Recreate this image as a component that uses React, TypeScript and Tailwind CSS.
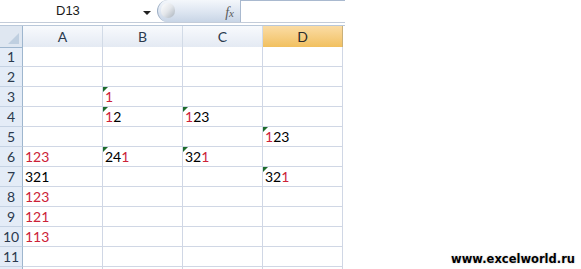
import React from "react";

type Seg = { t: string; r?: boolean };
type Cell = { segs: Seg[]; tri?: boolean } | null;

const R = (t: string): Seg => ({ t, r: true });
const K = (t: string): Seg => ({ t });

const rows: Cell[][] = [
  [null, null, null, null],
  [null, null, null, null],
  [null, { segs: [R("1")], tri: true }, null, null],
  [null, { segs: [R("1"), K("2")], tri: true }, { segs: [R("1"), K("23")], tri: true }, null],
  [null, null, null, { segs: [R("1"), K("23")], tri: true }],
  [{ segs: [R("123")] }, { segs: [K("24"), R("1")], tri: true }, { segs: [K("32"), R("1")], tri: true }, null],
  [{ segs: [K("321")] }, null, null, { segs: [K("32"), R("1")], tri: true }],
  [{ segs: [R("123")] }, null, null, null],
  [{ segs: [R("121")] }, null, null, null],
  [{ segs: [R("113")] }, null, null, null],
  [null, null, null, null],
  [null, null, null, null],
];

const cellFont = { fontFamily: "Lato, 'Noto Sans', sans-serif" };

export default function App() {
  return (
    <div className="relative w-[581px] h-[269px] bg-white overflow-hidden">
      <div className="w-[345px]">
        {/* formula bar */}
        <div className="flex h-[23px] border-b border-[#c3ccd9]">
          <div className="relative w-[157px] h-full bg-white">
            <span
              className="absolute left-[56px] top-[3px] text-[13px] leading-[16px] text-[#1a1a1a]"
              style={{ fontFamily: "'Liberation Sans', Arial, sans-serif" }}
            >
              D13
            </span>
            <span className="absolute left-[143px] top-[11px] w-0 h-0 border-l-[4px] border-r-[4px] border-t-[4px] border-l-transparent border-r-transparent border-t-[#222]" />
          </div>
          <div className="relative w-[83px] h-full rounded-l-[11px] bg-gradient-to-b from-[#f4f7fb] via-[#dfe7f2] to-[#c8d5e6] border-l border-[#9fb0c6]">
            <span className="absolute left-[3px] top-[3px] w-[14px] h-[15px] rounded-full bg-gradient-to-br from-[#ffffff] via-[#e3e6ea] to-[#a9b2bc]" />
            <span
              className="absolute right-[6px] top-[2px] text-[14px] italic text-[#5a5a5a]"
              style={{ fontFamily: "'Liberation Serif', 'Times New Roman', serif" }}
            >
              f<span className="text-[11px]">x</span>
            </span>
          </div>
          <div className="flex-1 h-full bg-white border-t border-l border-[#a9b9cf]" />
        </div>
        <div className="h-[2px] bg-white" />
        {/* column headers */}
        <div
          className="grid grid-cols-[23px_80px_80px_80px_80px] h-[22px] border-t border-[#b9c8da]"
          style={{ fontFamily: "Lato, 'Noto Sans', sans-serif" }}
        >
          <div className="relative bg-[#dfe7f1] border-r border-b border-[#9eb6ce]">
            <span className="absolute right-[3px] bottom-[3px] w-0 h-0 [border-left:11px_solid_transparent] [border-bottom:11px_solid_#bfcfe0]" />
          </div>
          {["A", "B", "C"].map((c) => (
            <div
              key={c}
              className="flex items-center justify-center bg-gradient-to-b from-[#f8fafd] to-[#e4eaf3] border-r border-b border-r-[#d2dbe7] border-b-[#9eb6ce] text-[14px] text-[#2b3a4e]"
            >
              {c}
            </div>
          ))}
          <div className="flex items-center justify-center bg-gradient-to-b from-[#fbdca4] to-[#f1c05e] border-r border-b border-r-[#c9b07a] border-b-[#f2a93b] text-[14px] text-[#2b2b2b]">
            D
          </div>
        </div>
        {/* rows */}
        {rows.map((row, i) => (
          <div key={i} className="grid grid-cols-[23px_80px_80px_80px_80px] h-[20px]" style={cellFont}>
            <div className="flex items-center justify-center bg-[#e4ecf7] border-r border-b border-r-[#9eb6ce] border-b-[#c5d2e3] text-[14px] leading-[19px] text-[#2b3a4e]">
              {i < 11 ? i + 1 : ""}
            </div>
            {row.map((cell, j) => (
              <div key={j} className="relative border-r border-b border-[#d0d7e5] bg-white">
                {cell && (
                  <>
                    {cell.tri && (
                      <span className="absolute left-0 top-0 w-0 h-0 border-t-[5px] border-r-[5px] border-t-[#1d6b2c] border-r-transparent" />
                    )}
                    <span className="absolute left-[2px] top-0 text-[14px] leading-[19px] text-black">
                      {cell.segs.map((s, k) => (
                        <span key={k} className={s.r ? "text-[#cc2238]" : "text-black"}>
                          {s.t}
                        </span>
                      ))}
                    </span>
                  </>
                )}
              </div>
            ))}
          </div>
        ))}
      </div>
      <div
        className="absolute right-[6px] bottom-[3px] text-[11.5px] font-bold text-black leading-[14px] [text-shadow:0_0_1px_#fff,0_0_2px_#bbb]"
        style={{ fontFamily: "'DejaVu Sans', Verdana, sans-serif" }}
      >
        www.excelworld.ru
      </div>
    </div>
  );
}
